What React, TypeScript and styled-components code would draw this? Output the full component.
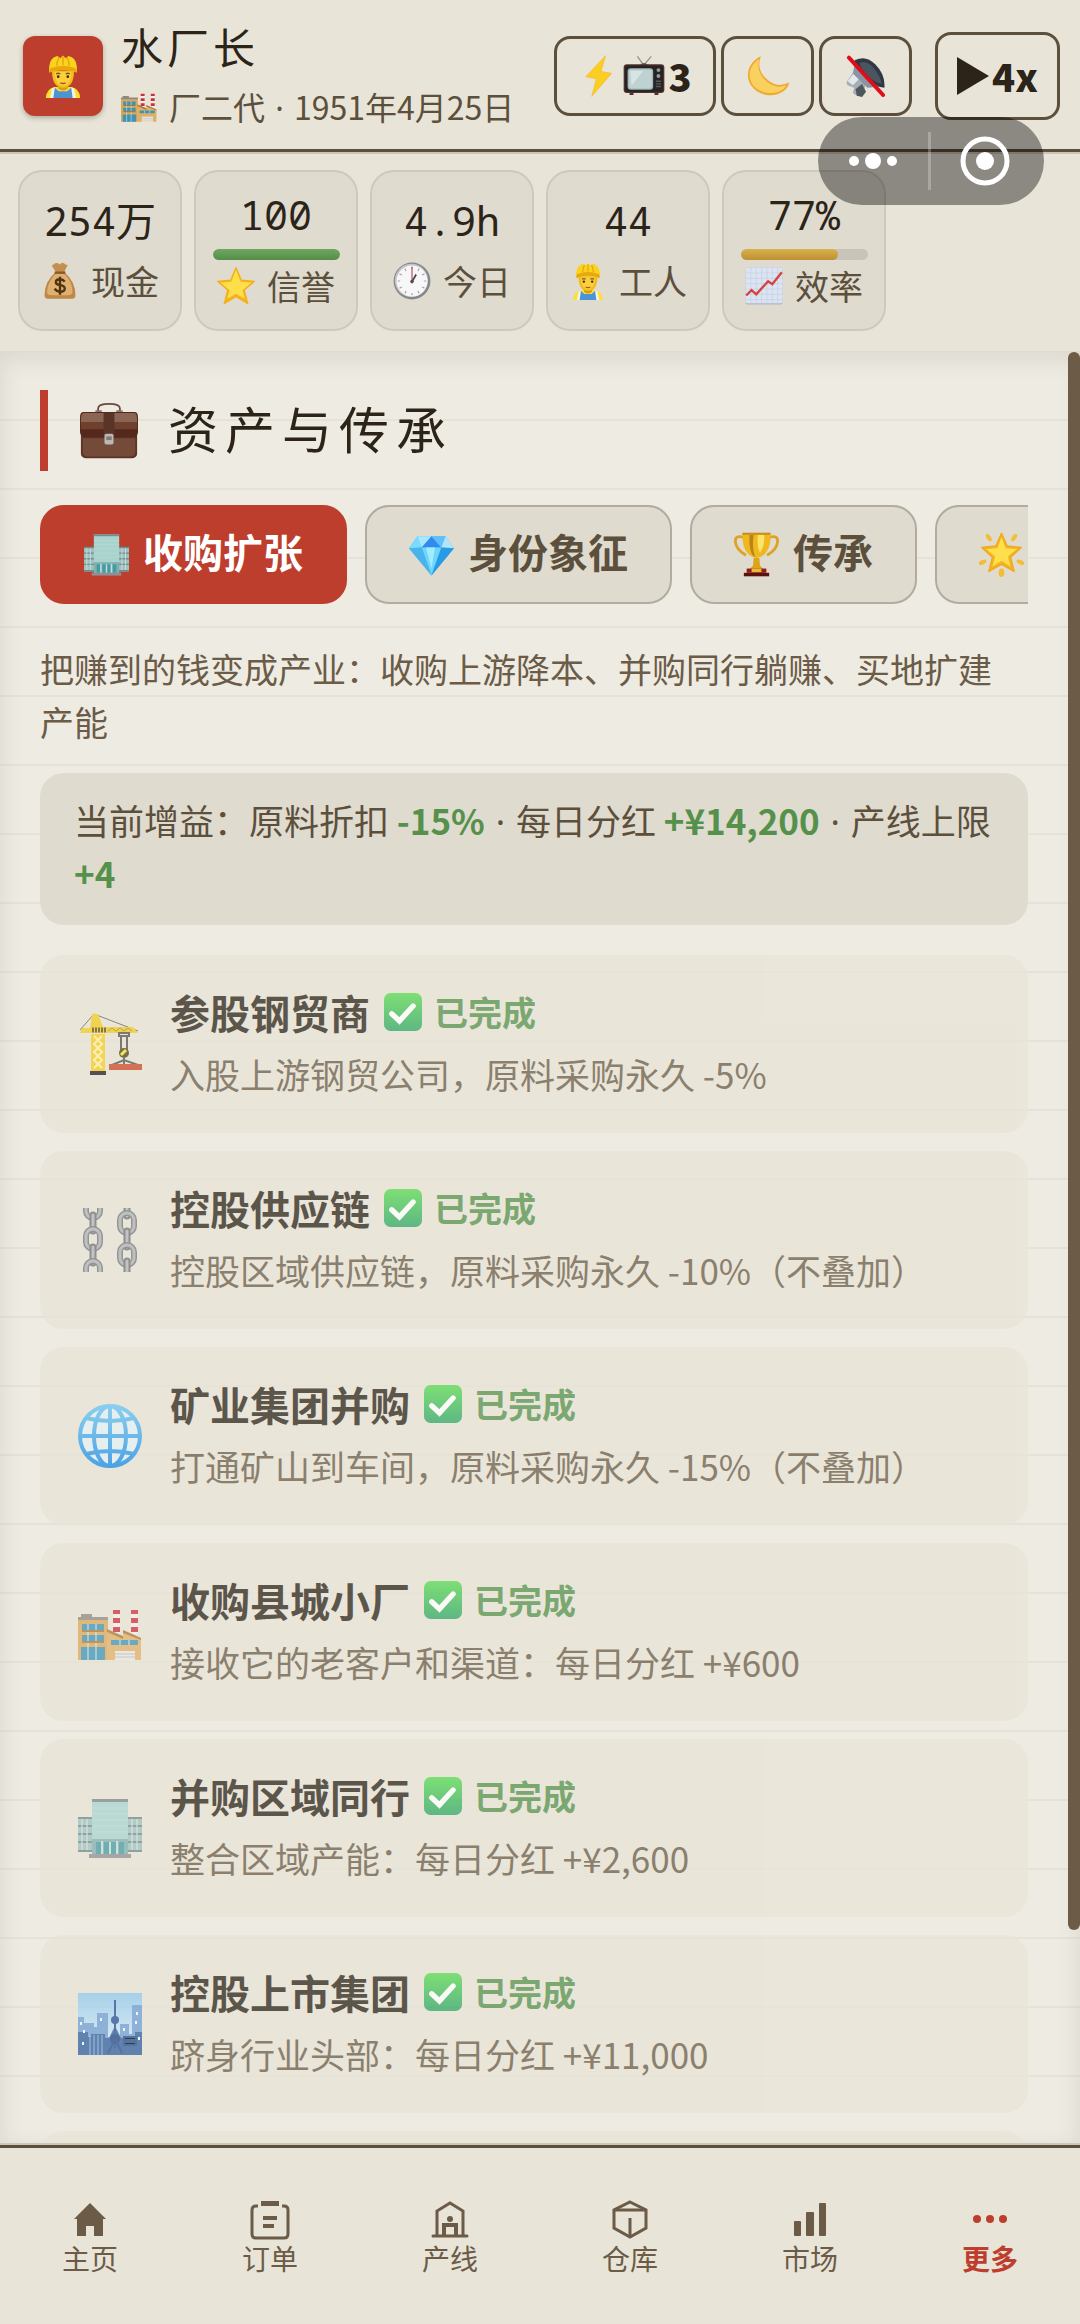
import React from 'react';
import styled, { createGlobalStyle, css } from 'styled-components';

const ink = '#2c2418';
const brown = '#5c4f3c';
const soft = '#6b5b47';
const red = '#be3e2e';
const green = '#55914b';
const paper = '#e8e4d8';
const tile = '#dfdbcf';

const sans = '"Noto Sans CJK SC", "Noto Sans", sans-serif';
const mono = '"Noto Sans Mono", "DejaVu Sans Mono", "Noto Sans CJK SC", monospace';

const GlobalStyle = createGlobalStyle`
  * { box-sizing: border-box; }
  body { margin: 0; background: ${paper}; font-family: ${sans}; color: ${ink}; }
  button { font-family: inherit; color: inherit; cursor: pointer; }
`;

/* ---------- pictographs ---------- */

const Svg = styled.svg<{ $size: number }>`
  width: ${(p) => p.$size}px;
  height: ${(p) => p.$size}px;
  flex: none;
  display: block;
`;

type IconName =
  | 'worker' | 'factory' | 'bolt' | 'tv' | 'moon' | 'muted' | 'bag' | 'star' | 'clock' | 'chart'
  | 'briefcase' | 'office' | 'gem' | 'trophy' | 'glow' | 'check' | 'crane' | 'chains' | 'globe' | 'city';

const chain = (x: number, ys: number[], flip: boolean) =>
  ys.map((y, i) =>
    (i % 2 === 0) !== flip ? (
      <g key={y}>
        <rect x={x - 7} y={y - 10} width="14" height="20" rx="7" fill="none" stroke="#77797b" strokeWidth="6" />
        <rect x={x - 7} y={y - 10} width="14" height="20" rx="7" fill="none" stroke="#b0b3b5" strokeWidth="3" />
      </g>
    ) : (
      <g key={y}>
        <path d={`M${x} ${y - 8}V${y + 8}`} stroke="#6f7173" strokeWidth="7" strokeLinecap="round" />
        <path d={`M${x} ${y - 8}V${y + 8}`} stroke="#b4b6b8" strokeWidth="3" strokeLinecap="round" />
      </g>
    ),
  );

const art: Record<IconName, React.ReactNode> = {
  worker: (
    <>
      <path d="M7 64q1-14 13-16h24q12 2 13 16z" fill="#fbe12c" />
      <path d="M13 64l3-14 4-2 2 16zM51 64l-3-14-4-2-2 16z" fill="#f4f2e6" />
      <path d="M18 64l2-15 6 5h12l6-5 2 15z" fill="#4d94d6" />
      <path d="M25 44h14v6q-7 6-14 0z" fill="#d99a17" />
      <path d="M16 24q0 25 16 25t16-25z" fill="#f3bd22" />
      <path d="M20 26q1 20 12 20t12-20z" fill="#fbd03a" />
      <path d="M12 27Q10 6 24 3l4 3 4-4 4 4 4-3q14 3 12 24-20-8-40 0z" fill="#fcd21c" />
      <path d="M13 21q19-8 38 0l1 6q-20-8-40 0z" fill="#e7a80f" />
      <path d="M26 5q-3 6-3 12M38 5q3 6 3 12M32 4v12" stroke="#e3a511" strokeWidth="2" fill="none" />
      <path d="M22 29q3-2 6 0M36 29q3-2 6 0" stroke="#865512" strokeWidth="2" fill="none" />
      <circle cx="25" cy="33" r="2" fill="#3d2c17" />
      <circle cx="39" cy="33" r="2" fill="#3d2c17" />
      <path d="M28 42q4 2 8 0" stroke="#a5551f" strokeWidth="2" fill="none" />
    </>
  ),
  factory: (
    <>
      <path d="M35 10h7v24h-7zM53 10h7v24h-7z" fill="#f2efec" />
      <path d="M35 10h7v4h-7zM35 18h7v5h-7zM35 27h7v5h-7zM53 10h7v4h-7zM53 18h7v5h-7zM53 27h7v5h-7z" fill="#c9323a" />
      <path d="M0 18h30v42H0z" fill="#dba85a" />
      <path d="M0 17h30v3H0zM3 14h11v3H3z" fill="#8f8a80" />
      <path d="M29 30l16 7v-7l18 8v22H29z" fill="#e0b067" />
      <path d="M29 29l16 7v-6l18 8v2L45 33v6l-16-7z" fill="#a9793b" />
      <path d="M4 24h22v6H4zM4 35h22v6H4zM33 40h27v5H33zM3 47h24v13H3z" fill="#3e94b5" />
      <path d="M10 24v36M18 24v36M42 40v5M51 40v5" stroke="#d9ecee" strokeWidth="1" />
      <path d="M4 31h22M4 42h22" stroke="#a77a3a" strokeWidth="2" />
      <path d="M37 51h20v9H37z" fill="#e9e8e5" />
      <path d="M37 54h20M37 57h20" stroke="#bcbab5" strokeWidth="1" />
    </>
  ),
  bolt: <path d="M42 1L12 33l16 3-7 27 30-35-16-3z" fill="#fbce24" stroke="#f3bb1a" strokeWidth="1" />,
  tv: (
    <>
      <path d="M31 15L22 2M32 15L43 2" stroke="#96928d" strokeWidth="2" />
      <path d="M26 15q6-6 12 0z" fill="#5a5552" />
      <rect x="1" y="14" width="62" height="44" rx="5" fill="#54302b" />
      <rect x="3" y="16" width="58" height="40" rx="4" fill="#262323" />
      <path d="M10 58h6v3h-6zM48 58h6v3h-6z" fill="#493630" />
      <rect x="7" y="20" width="39" height="33" rx="5" fill="#9fb8b9" />
      <rect x="9" y="22" width="35" height="29" rx="4" fill="#bdd2d1" />
      <path d="M11 24h20L13 47z" fill="#d7e4e2" />
      <circle cx="54" cy="23" r="3" fill="#92989c" />
      <circle cx="54" cy="32" r="3" fill="#92989c" />
      <path d="M50 40h8M50 44h8M50 48h8" stroke="#5a5a5c" strokeWidth="2" />
    </>
  ),
  moon: (
    <>
      <path d="M21 2C3 10-4 31 6 46s34 21 50 9q7-5 8-13-17 8-30-2C19 29 16 16 21 2z" fill="#efa933" />
      <path d="M19 6C4 15 0 31 8 44s31 19 46 9q4-3 6-7-16 6-28-4C18 31 15 19 19 6z" fill="#fad05e" />
    </>
  ),
  muted: (
    <>
      <path d="M2 42l12-18 18 20-4 12-10 6-6-4 2-8-10-4z" fill="#a6adb6" />
      <path d="M4 40l9-12 8 9-9 9z" fill="#e4e8ec" />
      <path d="M16 52l10-8 6 12-6 8-8-2z" fill="#4e565e" />
      <path d="M12 28L16 6l44 42-26 2z" fill="#8b94a2" />
      <path d="M12 10Q30-2 46 14T60 50q-16-2-30-16T12 10z" fill="#303842" />
      <path d="M22 12q12-4 22 8t12 24q-12-2-22-13T22 12z" fill="#4b5562" />
      <path d="M6 4l52 57" stroke="#e00d18" strokeWidth="6" strokeLinecap="round" />
    </>
  ),
  bag: (
    <>
      <path d="M21 4q6-5 10 0 6-5 10 0l4 1-6 12H25L18 6z" fill="#c58f4f" />
      <path d="M25 17h14q19 16 19 39 0 6-6 6H12q-6 0-6-6 0-23 19-39z" fill="#bf8848" />
      <path d="M26 19h12q15 14 15 31 0 6-9 6H18q-8 0-8-6 2-19 16-31z" fill="#deb170" />
      <path d="M23 16h18v4H23z" fill="#8b5a29" />
      <path d="M40 33q-3-4-8-4-7 0-7 5 0 4 7 5 8 1 8 6t-8 5q-6 0-9-5M32 25v30" stroke="#513312" strokeWidth="4" fill="none" />
    </>
  ),
  star: (
    <>
      <path d="M32 1l9 21 22 2-17 15 6 23-20-12-20 12 6-23L1 24l22-2z" fill="#f5b11d" stroke="#f5b11d" strokeWidth="2" strokeLinejoin="round" />
      <path d="M32 5l8 20 18 1-15 13 4 15-15-9-15 9 4-15L6 26l18-1z" fill="#fddf49" />
    </>
  ),
  clock: (
    <>
      <circle cx="32" cy="32" r="31" fill="#85878b" />
      <circle cx="31" cy="31" r="28" fill="#c2c4c8" />
      <circle cx="32" cy="32" r="26" fill="#f7f7f8" />
      <g stroke="#a5a7ab" strokeWidth="2">
        <path d="M32 8v4M32 52v4M8 32h4M52 32h4M20 11l2 4M42 49l2 4M11 20l4 2M49 42l4 2M44 11l-2 4M22 49l-2 4M53 20l-4 2M15 42l-4 2" />
      </g>
      <path d="M32 32V8" stroke="#bf4c5c" strokeWidth="2" />
      <path d="M32 33l7-12" stroke="#45464b" strokeWidth="3" />
      <circle cx="32" cy="33" r="3" fill="#5d4550" />
    </>
  ),
  chart: (
    <>
      <rect x="1" y="1" width="62" height="62" rx="3" fill="#aab8cd" />
      <rect x="1" y="1" width="62" height="60" rx="3" fill="#dce4f1" />
      <path d="M1 10h62M1 19h62M1 28h62M1 37h62M1 46h62M1 55h62M10 1v60M19 1v60M28 1v60M37 1v60M46 1v60M55 1v60" stroke="#c0cde0" strokeWidth="1" />
      <path d="M2 48l9-9 8 7 20-22 7 5L62 9" stroke="#d5433c" strokeWidth="4" fill="none" />
    </>
  ),
  briefcase: (
    <>
      <path d="M20 12V7q0-5 12-5t12 5v5" fill="none" stroke="#6a4a3b" strokeWidth="2" />
      <path d="M17 9h7v3h-7zM40 9h7v3h-7z" fill="#8d786c" />
      <rect x="1" y="28" width="62" height="34" rx="5" fill="#5b3426" />
      <path d="M3 40h58v15q0 5-5 5H8q-5 0-5-5z" fill="#744a38" />
      <path d="M4 11h56q4 0 4 6v16q0 6-8 6H8q-8 0-8-6V17q0-6 4-6z" fill="#54281c" />
      <path d="M4 12h56q3 0 3 9v4H1v-4q0-9 3-9z" fill="#8b6554" />
      <path d="M1 22h62v8H1z" fill="#70402f" />
      <path d="M26 12h12v25H26z" fill="#5a3427" />
      <rect x="27" y="35" width="10" height="12" rx="2" fill="#bcb9b5" />
      <path d="M29 38h6v4h-6z" fill="#807b76" />
    </>
  ),
  office: (
    <>
      <path d="M0 22h15v34H0zM49 22h15v34H49z" fill="#9ec1bf" />
      <path d="M0 22h15M0 30h15M0 38h15M0 46h15M0 55h15M49 22h15M49 30h15M49 38h15M49 46h15M49 55h15" stroke="#6f8c8c" strokeWidth="2" />
      <path d="M4 23v31M9 23v31M54 23v31M59 23v31" stroke="#d9eae7" strokeWidth="1" />
      <path d="M14 3h36v41H14z" fill="#a9d3cd" />
      <path d="M14 3h36v3H14z" fill="#7f8b8b" />
      <path d="M14 12h36M14 18h36M14 24h36M14 30h36M14 36h36" stroke="#b6dcd6" strokeWidth="1" />
      <path d="M14 43h36v17H14z" fill="#7fb0b0" />
      <path d="M18 46h5v12h-5zM26 46h12v12H26zM41 46h5v12h-5z" fill="#459ba2" />
      <path d="M32 46v12M24 45v13M39 45v13" stroke="#c6dddd" strokeWidth="2" />
      <path d="M11 58h42v4H11z" fill="#928e94" />
    </>
  ),
  gem: (
    <>
      <path d="M12 6h40l12 17-32 39L0 23z" fill="#48b8f5" />
      <path d="M12 6l6 16L0 23z" fill="#78dcff" />
      <path d="M12 6h20L18 22z" fill="#a7e8fe" />
      <path d="M32 6l14 16H18z" fill="#328af1" />
      <path d="M32 6h20l-6 16z" fill="#62bff9" />
      <path d="M52 6l12 17-18-1z" fill="#b1e5fb" />
      <path d="M18 22h28L32 62z" fill="#6ed6fb" />
      <path d="M0 23l18-1 14 40z" fill="#4bb3ec" />
      <path d="M64 23l-18-1-14 40z" fill="#289be5" />
      <path d="M24 22l8 30 5-30z" fill="#a1ebff" />
    </>
  ),
  trophy: (
    <>
      <path d="M15 8Q1 3 2 14t15 19M49 8q14-5 13 6T47 33" stroke="#dca326" strokeWidth="4" fill="none" />
      <path d="M12 2h40q1 20-9 30-4 4-11 5-7-1-11-5-10-10-9-30z" fill="#efb81f" />
      <path d="M22 4h6q-3 16 2 32-9-4-8-32z" fill="#b9831a" />
      <path d="M34 4h9q1 15-6 26-5-10-3-26z" fill="#fce46b" />
      <path d="M12 1h40v3H12z" fill="#c8901b" />
      <path d="M28 37h8l1 11 5 5H22l5-5z" fill="#dfa21c" />
      <path d="M18 52h28v6H18z" fill="#8d1f17" />
      <path d="M25 52h14v5H25z" fill="#eaba35" />
      <path d="M14 58h36v5H14z" fill="#5c110f" />
    </>
  ),
  glow: (
    <>
      <path d="M32 2l8 18 20 2-15 14 5 20-18-10-18 10 5-20L4 22l20-2z" fill="#f5b31f" stroke="#f0a81e" strokeWidth="2" strokeLinejoin="round" />
      <path d="M32 7l6 16 16 1-13 11 4 14-13-8-13 8 4-14-13-11 16-1z" fill="#fde04b" />
      <g fill="#f4bd37">
        <ellipse cx="14" cy="8" rx="3" ry="6" transform="rotate(-35 14 8)" />
        <ellipse cx="50" cy="8" rx="3" ry="6" transform="rotate(35 50 8)" />
        <ellipse cx="5" cy="43" rx="3" ry="6" transform="rotate(65 5 43)" />
        <ellipse cx="59" cy="43" rx="3" ry="6" transform="rotate(-65 59 43)" />
        <ellipse cx="32" cy="58" rx="4" ry="6" />
      </g>
    </>
  ),
  check: (
    <>
      <defs>
        <linearGradient id="checkFill" x1="0" y1="0" x2="0" y2="1">
          <stop offset="0" stopColor="#58dc50" />
          <stop offset="1" stopColor="#2fa565" />
        </linearGradient>
      </defs>
      <rect width="64" height="64" rx="11" fill="url(#checkFill)" />
      <path d="M13 35l13 12 23-25" stroke="#fff" strokeWidth="9" fill="none" strokeLinecap="round" />
    </>
  ),
  crane: (
    <>
      <path d="M2 18L16 2l44 17M16 2v12" stroke="#66655c" strokeWidth="1" fill="none" />
      <path d="M14 2h6l5 13h30l5 6H2l2-5h8z" fill="#f3cb22" />
      <path d="M14 18h14" stroke="#655012" strokeWidth="5" strokeDasharray="2 1" />
      <path d="M30 19l4-3 4 3 4-3 4 3 4-3 4 3" stroke="#a98b19" strokeWidth="1" fill="none" />
      <path d="M13 22h14v37H13z" fill="#f5cd25" />
      <path d="M16 24l8 8-8 8 8 8-8 8M24 24l-8 8 8 8-8 8 8 8" stroke="#fff2a6" strokeWidth="2" fill="none" />
      <path d="M12 59h16v4H12z" fill="#1f2020" />
      <path d="M41 21h10v3H41zM43 24v14M49 24v14M46 46v7M34 53l12-5 14 5" stroke="#58544b" strokeWidth="2" fill="none" />
      <circle cx="46" cy="41" r="5" fill="#4d4618" />
      <path d="M43 43l5-5" stroke="#ffe12f" strokeWidth="3" />
      <path d="M31 52h33v6H31z" fill="#cc4824" />
    </>
  ),
  chains: (
    <>
      {chain(15, [0, 15, 31, 47, 63], false)}
      {chain(49, [0, 15, 31, 47, 61], true)}
    </>
  ),
  globe: (
    <>
      <defs>
        <linearGradient id="globeStroke" x1="0" y1="0" x2="0" y2="64" gradientUnits="userSpaceOnUse">
          <stop offset="0" stopColor="#6bc7f2" />
          <stop offset="1" stopColor="#1689e6" />
        </linearGradient>
      </defs>
      <circle cx="32" cy="32" r="30" fill="#e4f1f4" />
      <g fill="none" stroke="url(#globeStroke)" strokeWidth="4">
        <circle cx="32" cy="32" r="30" />
        <ellipse cx="32" cy="32" rx="16" ry="30" />
        <path d="M32 2v60M2 32h60M8 14q24 6 48 0M8 50q24-6 48 0" />
      </g>
    </>
  ),
  city: (
    <>
      <defs>
        <linearGradient id="citySky" x1="0" y1="0" x2="0" y2="1">
          <stop offset="0" stopColor="#8fc8ed" />
          <stop offset="1" stopColor="#e5f3fb" />
        </linearGradient>
      </defs>
      <path d="M0 1h64v62H0z" fill="url(#citySky)" />
      <path d="M0 25h6v6h10v4h3V21h11v24h12V32h9v10h3V13h10v50H0z" fill="#6f9fd4" />
      <path d="M0 40h10v5h3v-3h14v4h4l6-12 6 12h14v-6h7v23H0z" fill="#315f9f" />
      <path d="M12 43v20M16 43v20M20 43v20M24 43v20" stroke="#8db4df" strokeWidth="1" />
      <path d="M37 8v48" stroke="#264f94" strokeWidth="2" />
      <circle cx="37" cy="28" r="4" fill="#264f94" />
      <circle cx="37" cy="47" r="5" fill="#1f4585" />
      <path d="M37 47l-7 14M37 47l7 14M46 45h12v3H46zM46 50h12v3H46z" stroke="#234b8c" strokeWidth="2" />
      <path d="M2 30h2v3H2zM5 38h2v3H5zM22 26h2v3h-2zM58 20h2v3h-2zM45 36h2v3h-2zM57 29h2v3h-2zM60 45h2v3h-2zM4 50h2v3H4z" fill="#f2f9fd" />
    </>
  ),
};

function Pict({ name, size }: { name: IconName; size: number }) {
  return (
    <Svg $size={size} viewBox="0 0 64 64" aria-hidden="true">
      {art[name]}
    </Svg>
  );
}

/* ---------- page ---------- */

const Page = styled.div`
  display: flex;
  flex-direction: column;
  height: 100vh;
  background: ${paper};
`;

/* The separator dot needs a Latin face: CJK faces draw it a full character wide. */
const Dot = styled.span`
  margin: 0 3px;
  font-family: 'Noto Sans', sans-serif;
  line-height: 0;
`;

/* Raises large CJK captions to the optical centre of their row. */
const Caption = styled.span`
  padding-bottom: 8px;
`;

const Header = styled.header`
  display: flex;
  align-items: center;
  gap: 18px;
  padding: 16px 20px 13px 23px;
  border-bottom: 3px solid ${brown};
  box-shadow: 0 2px 0 #cbc5b7;
`;

const Avatar = styled.div`
  display: grid;
  place-items: center;
  width: 80px;
  height: 80px;
  border-radius: 12px;
  background: ${red};
  box-shadow: 0 2px 5px rgba(44, 36, 24, 0.3);
`;

const Identity = styled.div`
  flex: 1;
  white-space: nowrap;
`;

const Name = styled.h1`
  margin: 0;
  font-size: 42px;
  font-weight: 400;
  line-height: 60px;
  letter-spacing: 4px;
`;

const Meta = styled.p`
  display: flex;
  align-items: center;
  gap: 12px;
  margin: 0;
  font-size: 32px;
  line-height: 60px;
  color: ${brown};
`;

const Tools = styled.div`
  display: flex;
  align-items: center;
  gap: 5px;
`;

const ToolButton = styled.button<{ $wide?: boolean }>`
  display: flex;
  align-items: center;
  justify-content: center;
  gap: 3px;
  width: ${(p) => (p.$wide ? 162 : 93)}px;
  height: 80px;
  padding: 0;
  border: 3px solid ${brown};
  border-radius: 16px;
  background: none;
  color: ${ink};
  font-size: 38px;
  font-weight: 900;
  line-height: 40px;
`;

const SpeedButton = styled(ToolButton)`
  width: 125px;
  height: 88px;
  margin-left: 18px;
`;

const Stats = styled.section`
  display: flex;
  gap: 12px;
  padding: 18px 18px 20px;
  border-bottom: 1px solid #dedace;
`;

const Stat = styled.div`
  display: flex;
  flex-direction: column;
  align-items: center;
  justify-content: center;
  width: 164px;
  height: 161px;
  border: 2px solid #d0c8bd;
  border-radius: 24px;
  background: ${tile};
`;

const StatValue = styled.strong`
  font-family: ${mono};
  font-size: 40px;
  font-weight: 400;
  line-height: 60px;
`;

const Meter = styled.div`
  width: 127px;
  height: 11px;
  margin: 4px 0 -4px;
  border-radius: 6px;
  background: #c9c4b8;
  overflow: hidden;
`;

const MeterFill = styled.div<{ $tone: 'good' | 'warn' }>`
  height: 100%;
  border-radius: 6px;
  background: ${(p) =>
    p.$tone === 'good' ? 'linear-gradient(#6ea85e, #558d49)' : 'linear-gradient(#d8b14b, #bf9036)'};
`;

const StatLabel = styled.span`
  display: flex;
  align-items: center;
  gap: 12px;
  font-size: 34px;
  line-height: 60px;
  color: ${brown};
`;

const Capsule = styled.div`
  position: absolute;
  top: 117px;
  right: 36px;
  display: flex;
  align-items: center;
  width: 226px;
  height: 88px;
  padding-right: 4px;
  border-radius: 44px;
  background: rgba(0, 0, 0, 0.4);
`;

const CapsuleButton = styled.button`
  display: grid;
  place-items: center;
  flex: 1;
  height: 58px;
  padding: 0;
  border: 0;
  background: none;
  & + & {
    border-left: 3px solid rgba(255, 255, 255, 0.25);
  }
`;

const Viewport = styled.div`
  display: flex;
  flex: 1;
  min-height: 0;
  background: repeating-linear-gradient(#eeebe2 0 67px, #e6e2d9 67px 69px);
  box-shadow: inset 0 6px 24px rgba(44, 36, 24, 0.1);
`;

const Panel = styled.main`
  flex: 1;
  min-width: 0;
  padding: 38px 40px 0;
  overflow: hidden;
`;

const Track = styled.div`
  width: 12px;
`;

const Thumb = styled.div`
  height: 88%;
  border-radius: 6px;
  background: ${soft};
`;

const Title = styled.h2`
  display: flex;
  align-items: center;
  gap: 30px;
  height: 81px;
  margin: 0 0 34px;
  padding-left: 32px;
  border-left: 8px solid ${red};
  font-size: 50px;
  font-weight: 400;
  line-height: 60px;
  letter-spacing: 7px;
`;

const Tabs = styled.div`
  display: flex;
  gap: 18px;
  margin-bottom: 38px;
  overflow: hidden;
`;

const Tab = styled.button<{ $active?: boolean }>`
  display: flex;
  align-items: center;
  flex: none;
  gap: 14px;
  height: 99px;
  padding: 0 42px;
  border: 2px solid #b2aca0;
  border-radius: 24px;
  background: ${tile};
  color: ${brown};
  font-size: 40px;
  font-weight: 700;
  line-height: 60px;
  ${(p) =>
    p.$active &&
    css`
      border-color: ${red};
      background: ${red};
      color: #fff;
    `}
`;

const Intro = styled.p`
  margin: 0 0 25px;
  padding-right: 16px;
  font-size: 34px;
  line-height: 53px;
  color: ${soft};
`;

const Bonus = styled.p`
  margin: 0 0 30px;
  padding: 20px 30px 26px 34px;
  border-radius: 24px;
  background: ${tile};
  font-size: 35px;
  line-height: 53px;
  color: ${brown};
  b {
    color: ${green};
  }
`;

const Deals = styled.ul`
  display: flex;
  flex-direction: column;
  gap: 18px;
  margin: 0;
  padding: 0;
  list-style: none;
`;

const Deal = styled.li`
  display: flex;
  align-items: center;
  gap: 28px;
  min-height: 178px;
  padding: 26px 38px;
  border-radius: 24px;
  background: #e8e4d7;
  opacity: 0.75;
`;

const DealBody = styled.div`
  padding-bottom: 2px;
`;

const DealName = styled.h3`
  display: flex;
  align-items: center;
  gap: 14px;
  margin: 0;
  font-size: 40px;
  font-weight: 700;
  line-height: 62px;
`;

const Done = styled.span`
  display: flex;
  align-items: center;
  gap: 12px;
  font-size: 34px;
  color: ${green};
`;

const DealNote = styled.p`
  margin: 0;
  font-size: 35px;
  line-height: 62px;
  color: ${soft};
`;

const Nav = styled.nav`
  display: flex;
  height: 179px;
  border-top: 3px solid ${brown};
  box-shadow: 0 -2px 0 #cbc7bb;
  position: relative;
`;

const NavItem = styled.a<{ $active?: boolean }>`
  display: flex;
  flex: 1;
  flex-direction: column;
  align-items: center;
  padding-top: 52px;
  font-size: 28px;
  line-height: 36px;
  text-decoration: none;
  color: ${(p) => (p.$active ? red : soft)};
  font-weight: ${(p) => (p.$active ? 700 : 400)};
`;

const stats: { value: string; label: string; icon: IconName; meter?: number; tone?: 'good' | 'warn' }[] = [
  { value: '254万', label: '现金', icon: 'bag' },
  { value: '100', label: '信誉', icon: 'star', meter: 100, tone: 'good' },
  { value: '4.9h', label: '今日', icon: 'clock' },
  { value: '44', label: '工人', icon: 'worker' },
  { value: '77%', label: '效率', icon: 'chart', meter: 77, tone: 'warn' },
];

const deals: { icon: IconName; name: string; note: string }[] = [
  { icon: 'crane', name: '参股钢贸商', note: '入股上游钢贸公司，原料采购永久 -5%' },
  { icon: 'chains', name: '控股供应链', note: '控股区域供应链，原料采购永久 -10%（不叠加）' },
  { icon: 'globe', name: '矿业集团并购', note: '打通矿山到车间，原料采购永久 -15%（不叠加）' },
  { icon: 'factory', name: '收购县城小厂', note: '接收它的老客户和渠道：每日分红 +¥600' },
  { icon: 'office', name: '并购区域同行', note: '整合区域产能：每日分红 +¥2,600' },
  { icon: 'city', name: '控股上市集团', note: '跻身行业头部：每日分红 +¥11,000' },
];

const stroke = { fill: 'none', stroke: 'currentColor', strokeWidth: 3 };

const navItems: { label: string; icon: React.ReactNode; active?: boolean }[] = [
  {
    label: '主页',
    icon: <path d="M20 3L4 19h3v17h9v-10h8v10h9V19h3z" fill="currentColor" />,
  },
  {
    label: '订单',
    icon: (
      <>
        <path d="M8 6H6q-4 0-4 4v24q0 4 4 4h28q4 0 4-4V10q0-4-4-4h-2" {...stroke} />
        <path d="M11 1h18v5H11z" fill="currentColor" />
        <path d="M13 18h14M13 26h11" {...stroke} strokeWidth={4} />
      </>
    ),
  },
  {
    label: '产线',
    icon: (
      <>
        <path d="M3 36h34" {...stroke} strokeLinecap="round" />
        <path d="M7 36V11l13-8 13 8v25" {...stroke} />
        <path d="M14 36V25h12v11" {...stroke} strokeWidth={4} />
        <circle cx="20" cy="19" r="3" fill="currentColor" />
      </>
    ),
  },
  {
    label: '仓库',
    icon: (
      <>
        <path d="M20 2l16 8v18l-16 9-16-9V10z" {...stroke} />
        <path d="M4 10h32M20 18v19" {...stroke} />
      </>
    ),
  },
  {
    label: '市场',
    icon: (
      <g fill="currentColor">
        <rect x="4" y="21" width="7" height="15" rx="1" />
        <rect x="16" y="12" width="8" height="24" rx="1" />
        <rect x="29" y="3" width="7" height="33" rx="1" />
      </g>
    ),
  },
  {
    label: '更多',
    active: true,
    icon: (
      <g fill="currentColor">
        <circle cx="7" cy="19" r="4" />
        <circle cx="20" cy="19" r="4" />
        <circle cx="33" cy="19" r="4" />
      </g>
    ),
  },
];

export default function App() {
  return (
    <Page>
      <GlobalStyle />
      <Header>
        <Avatar>
          <Pict name="worker" size={44} />
        </Avatar>
        <Identity>
          <Name>水厂长</Name>
          <Meta>
            <Pict name="factory" size={36} />
            <span>
              厂二代 <Dot>·</Dot> 1951年4月25日
            </span>
          </Meta>
        </Identity>
        <Tools>
          <ToolButton $wide>
            <Pict name="bolt" size={42} />
            <Pict name="tv" size={42} />3
          </ToolButton>
          <ToolButton aria-label="夜间模式">
            <Pict name="moon" size={42} />
          </ToolButton>
          <ToolButton aria-label="静音">
            <Pict name="muted" size={42} />
          </ToolButton>
          <SpeedButton>
            <svg width="32" height="38" viewBox="0 0 32 38" aria-hidden="true">
              <path d="M0 0l32 19L0 38z" fill={ink} />
            </svg>
            4x
          </SpeedButton>
        </Tools>
      </Header>

      <Stats>
        {stats.map((s) => (
          <Stat key={s.label}>
            <StatValue>{s.value}</StatValue>
            {s.meter !== undefined && (
              <Meter>
                <MeterFill $tone={s.tone ?? 'good'} style={{ width: `${s.meter}%` }} />
              </Meter>
            )}
            <StatLabel>
              <Pict name={s.icon} size={38} />
              {s.label}
            </StatLabel>
          </Stat>
        ))}
      </Stats>

      <Viewport>
        <Panel>
          <Title>
            <Pict name="briefcase" size={58} />
            <Caption>资产与传承</Caption>
          </Title>
          <Tabs>
            <Tab $active>
              <Pict name="office" size={45} />
              <Caption>收购扩张</Caption>
            </Tab>
            <Tab>
              <Pict name="gem" size={45} />
              <Caption>身份象征</Caption>
            </Tab>
            <Tab>
              <Pict name="trophy" size={45} />
              <Caption>传承</Caption>
            </Tab>
            <Tab aria-label="星光">
              <Pict name="glow" size={45} />
            </Tab>
          </Tabs>
          <Intro>把赚到的钱变成产业：收购上游降本、并购同行躺赚、买地扩建产能</Intro>
          <Bonus>
            当前增益：原料折扣 <b>-15%</b> <Dot>·</Dot> 每日分红 <b>+¥14,200</b> <Dot>·</Dot> 产线上限 <b>+4</b>
          </Bonus>
          <Deals>
            {deals.map((d) => (
              <Deal key={d.name}>
                <Pict name={d.icon} size={64} />
                <DealBody>
                  <DealName>
                    {d.name}
                    <Done>
                      <Pict name="check" size={38} />
                      已完成
                    </Done>
                  </DealName>
                  <DealNote>{d.note}</DealNote>
                </DealBody>
              </Deal>
            ))}
            <Deal aria-hidden="true" />
          </Deals>
        </Panel>
        <Track>
          <Thumb />
        </Track>
      </Viewport>

      <Nav>
        {navItems.map((n) => (
          <NavItem key={n.label} href="#" $active={n.active}>
            <Svg $size={40} viewBox="0 0 40 40" aria-hidden="true">
              {n.icon}
            </Svg>
            {n.label}
          </NavItem>
        ))}
      </Nav>

      <Capsule>
        <CapsuleButton aria-label="菜单">
          <svg width="50" height="18" viewBox="0 0 50 18" aria-hidden="true">
            <g fill="#fff">
              <circle cx="6" cy="9" r="5" />
              <circle cx="25" cy="9" r="8" />
              <circle cx="44" cy="9" r="5" />
            </g>
          </svg>
        </CapsuleButton>
        <CapsuleButton aria-label="关闭">
          <svg width="50" height="50" viewBox="0 0 50 50" aria-hidden="true">
            <circle cx="25" cy="25" r="22" fill="none" stroke="#fff" strokeWidth="5" />
            <circle cx="25" cy="25" r="9" fill="#fff" />
          </svg>
        </CapsuleButton>
      </Capsule>
    </Page>
  );
}
